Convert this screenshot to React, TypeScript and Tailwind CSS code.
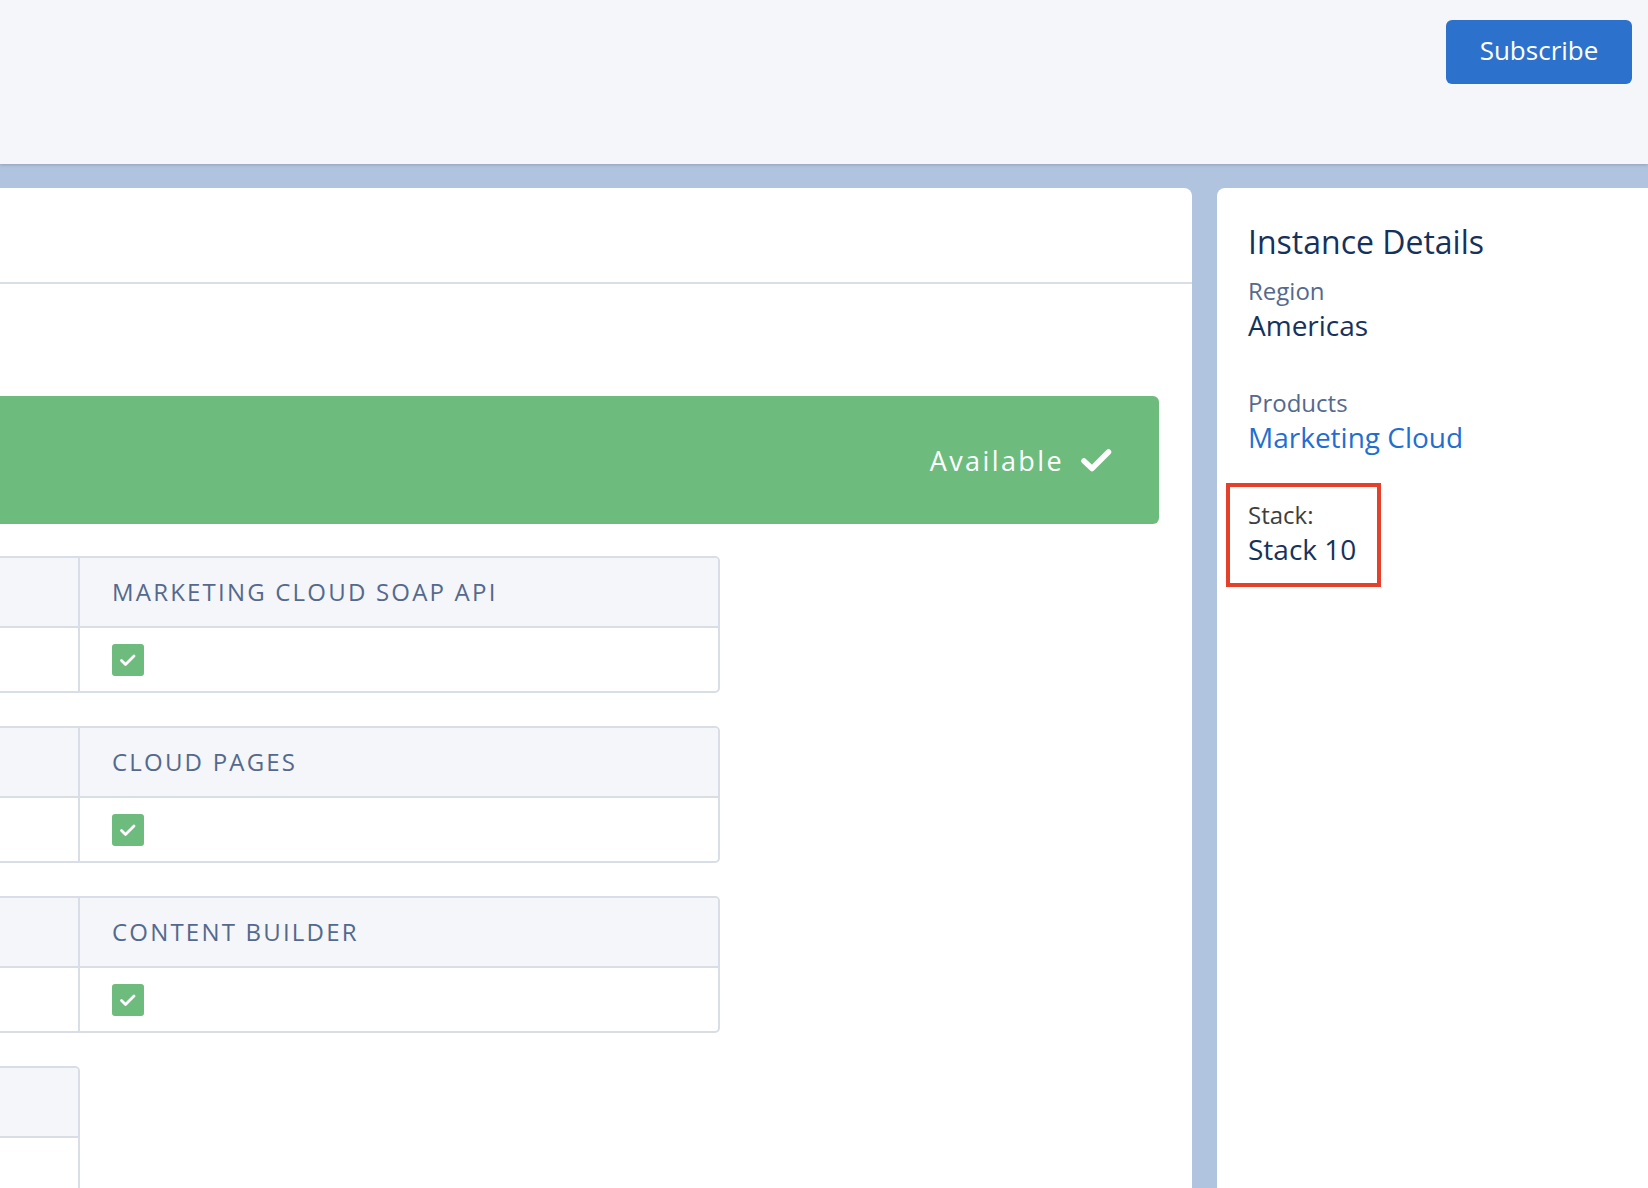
import React from "react";

const font = { fontFamily: '"Open Sans", "Noto Sans", sans-serif' };

function SmallCheck() {
  return (
    <div className="w-[32px] h-[32px] rounded-[3px] bg-[#6dbc7e] flex items-center justify-center">
      <svg width="32" height="32" viewBox="0 0 32 32">
        <polyline points="9.5,16.5 13.5,20.5 22,12" fill="none" stroke="#fff" strokeWidth="2.8" strokeLinecap="round" strokeLinejoin="round" />
      </svg>
    </div>
  );
}

function FeatureTable({ title }: { title: string }) {
  return (
    <div className="w-[1088px] border-2 border-[#d8dde6] rounded-[5px] overflow-hidden">
      <div className="flex h-[70px] bg-[#f4f6f9] border-b-2 border-[#d8dde6]">
        <div className="w-[446px] border-r-2 border-[#d8dde6]" />
        <div className="w-[638px] pl-[32px] flex items-center text-[24px] tracking-[2.2px] text-[#54698d]">{title}</div>
      </div>
      <div className="flex h-[63px]">
        <div className="w-[446px] border-r-2 border-[#d8dde6]" />
        <div className="w-[638px] pl-[32px] flex items-center">
          <SmallCheck />
        </div>
      </div>
    </div>
  );
}

export default function App() {
  return (
    <div className="w-[1648px] h-[1188px] overflow-hidden flex flex-col bg-[#b0c4df]" style={font}>
      <header className="h-[164px] shrink-0 bg-[#f4f6f9] shadow-[0_1px_3px_rgba(0,0,0,0.18)] relative z-10 flex justify-end items-start pt-[20px] pr-[16px]">
        <button className="w-[186px] h-[64px] pb-[4px] rounded-[6px] bg-[#2c72cc] text-white text-[26px] leading-none flex items-center justify-center">
          Subscribe
        </button>
      </header>
      <main className="flex-1 flex gap-[25px] pt-[24px] min-h-0">
        <section className="w-[1192px] shrink-0 bg-white rounded-tr-[8px] overflow-hidden">
          <div className="h-[96px] border-b-2 border-[#d8dde6]" />
          <div className="ml-[-368px] pr-[33px] pt-[112px]">
            <div className="h-[128px] rounded-[6px] bg-[#6dbc7e] flex items-center justify-end pr-[47px] gap-[16px]">
              <span className="text-white text-[27px] tracking-[2.4px] leading-none">Available</span>
              <svg width="32" height="24" viewBox="0 0 32 24">
                <polyline points="4,13 12,20.5 28.5,4" fill="none" stroke="#fff" strokeWidth="5.5" strokeLinecap="round" strokeLinejoin="round" />
              </svg>
            </div>
            <div className="mt-[32px] flex flex-col gap-[33px]">
              <FeatureTable title="MARKETING CLOUD SOAP API" />
              <FeatureTable title="CLOUD PAGES" />
              <FeatureTable title="CONTENT BUILDER" />
              <div className="w-[448px] h-[300px] border-2 border-[#d8dde6] rounded-[5px] overflow-hidden">
                <div className="h-[70px] bg-[#f4f6f9] border-b-2 border-[#d8dde6]" />
              </div>
            </div>
          </div>
        </section>
        <aside className="flex-1 bg-white rounded-tl-[8px] pl-[31px] pt-[34px]">
          <h2 className="text-[32px] leading-[40px] text-[#16325c]">Instance Details</h2>
          <div className="mt-[14px] text-[24px] leading-[30px] text-[#54698d]">Region</div>
          <div className="mt-[1px] text-[28px] leading-[36px] text-[#16325c]">Americas</div>
          <div className="mt-[45px] text-[24px] leading-[30px] text-[#54698d]">Products</div>
          <div className="mt-[1px] text-[28px] leading-[36px] text-[#1f6fd1]">Marketing Cloud</div>
          <div className="mt-[28px] -ml-[22px] w-[155px] h-[104px] border-[4px] border-[#e7402a] pl-[18px] pt-[13px]">
            <div className="text-[24px] leading-[30px] text-[#3e3e3c]">Stack:</div>
            <div className="mt-[1px] text-[28px] leading-[36px] text-[#16325c]">Stack 10</div>
          </div>
        </aside>
      </main>
    </div>
  );
}
